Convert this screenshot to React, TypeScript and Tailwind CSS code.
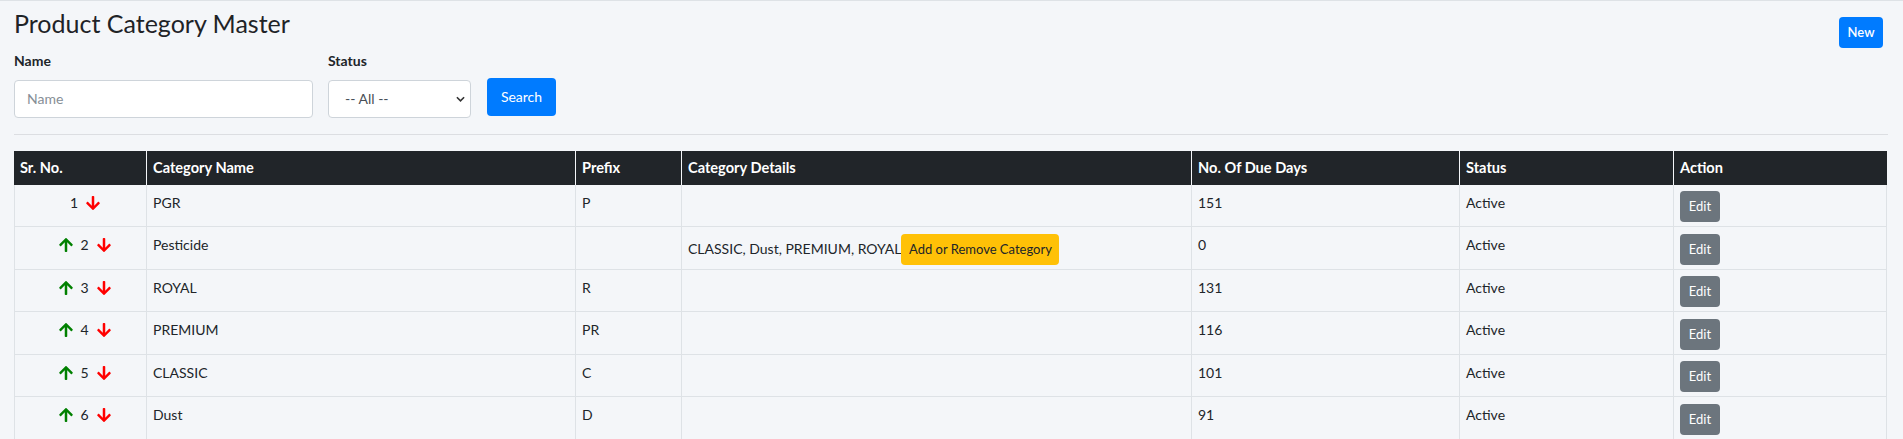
import React from 'react';

const UP_PATH =
  'M34.9 289.5l-22.2-22.2c-9.4-9.4-9.4-24.6 0-33.9L207 39c9.4-9.4 24.6-9.4 33.9 0l194.3 194.3c9.4 9.4 9.4 24.6 0 33.9L413 289.4c-9.5 9.5-25 9.3-34.3-.4L264 168.6V456c0 13.3-10.7 24-24 24h-32c-13.3 0-24-10.7-24-24V168.6L69.2 289.1c-9.3 9.8-24.8 10-34.3.4z';
const DOWN_PATH =
  'M413.1 222.5l22.2 22.2c9.4 9.4 9.4 24.6 0 33.9L241 473c-9.4 9.4-24.6 9.4-33.9 0L12.7 278.6c-9.4-9.4-9.4-24.6 0-33.9l22.2-22.2c9.5-9.5 25-9.3 34.3.4L184 343.4V56c0-13.3 10.7-24 24-24h32c13.3 0 24 10.7 24 24v287.4l114.8-120.5c9.3-9.8 24.8-10 34.3-.4z';

function ArrowUp() {
  return (
    <svg viewBox="0 0 448 512" className="inline-block w-[14px] h-[16px] align-[-3px] fill-[#008000] mr-[7px]">
      <path d={UP_PATH} />
    </svg>
  );
}

function ArrowDown() {
  return (
    <svg viewBox="0 0 448 512" className="inline-block w-[14px] h-[16px] align-[-3px] fill-[#ff0000] ml-[8px]">
      <path d={DOWN_PATH} />
    </svg>
  );
}

type Row = {
  n: number;
  name: string;
  prefix: string;
  details: string;
  days: string;
  up: boolean;
  btn?: boolean;
};

const rows: Row[] = [
  { n: 1, name: 'PGR', prefix: 'P', details: '', days: '151', up: false },
  { n: 2, name: 'Pesticide', prefix: '', details: 'CLASSIC, Dust, PREMIUM, ROYAL', days: '0', up: true, btn: true },
  { n: 3, name: 'ROYAL', prefix: 'R', details: '', days: '131', up: true },
  { n: 4, name: 'PREMIUM', prefix: 'PR', details: '', days: '116', up: true },
  { n: 5, name: 'CLASSIC', prefix: 'C', details: '', days: '101', up: true },
  { n: 6, name: 'Dust', prefix: 'D', details: '', days: '91', up: true },
];

const td = 'align-top pt-[7px] px-[6px] border-r border-b border-[#dee2e6] leading-[21px]';
const th = 'h-[34px] align-middle text-left px-[6px] font-bold text-[14.6px] text-white bg-[#212529] border-r border-[#f4f6f9] leading-[21px]';

export default function App() {
  return (
    <div className="min-h-screen w-full bg-[#f4f6f9] border-t border-[#dee2e6] text-[#212529] font-['Lato',sans-serif] text-[14px]">
      <div className="pl-[14px] pr-[15px]">
        <div className="flex justify-between items-start">
          <div>
            <h1 className="text-[25px] leading-[30px] mt-[6.5px] font-normal text-[#1f2327]">Product Category Master</h1>
            <div className="flex items-start mt-[12px]">
              <div className="w-[299px] flex flex-col">
                <label className="font-bold leading-[21px]">Name</label>
                <input
                  placeholder="Name"
                  className="mt-[9px] h-[38px] w-full bg-white border border-[#ced4da] rounded-[4px] pl-[12px] text-[14px] text-[#495057] placeholder:text-[#868e96] outline-none"
                />
              </div>
              <div className="w-[143px] ml-[15px] flex flex-col">
                <label className="font-bold leading-[21px]">Status</label>
                <div className="relative mt-[9px]">
                  <select className="appearance-none h-[38px] w-full bg-white border border-[#ced4da] rounded-[4px] pl-[16px] text-[14px] text-[#495057] outline-none">
                    <option>-- All --</option>
                    <option>Active</option>
                    <option>Inactive</option>
                  </select>
                  <svg viewBox="0 0 10 6" className="absolute right-[6px] top-[16px] w-[9px] h-[6px] pointer-events-none">
                    <polyline points="1,1 5,5 9,1" fill="none" stroke="#333" strokeWidth="1.8" />
                  </svg>
                </div>
              </div>
              <button className="ml-[16px] mt-[28px] w-[69px] h-[38px] bg-[#007bff] text-white rounded-[4px] text-[14px] flex items-center justify-center">
                Search
              </button>
            </div>
          </div>
          <button className="mt-[16px] mr-[5px] w-[44px] h-[31px] bg-[#007bff] text-white rounded-[4px] text-[13px] font-semibold flex items-center justify-center">
            New
          </button>
        </div>
        <hr className="mt-[16px] border-0 border-t border-[#dcdee2]" />
        <table className="mt-[16px] table-fixed border-separate border-spacing-0 w-[1873px]">
          <thead>
            <tr>
              <th className={`${th} w-[133px]`}>Sr. No.</th>
              <th className={`${th} w-[429px]`}>Category Name</th>
              <th className={`${th} w-[106px]`}>Prefix</th>
              <th className={`${th} w-[510px]`}>Category Details</th>
              <th className={`${th} w-[268px]`}>No. Of Due Days</th>
              <th className={`${th} w-[214px]`}>Status</th>
              <th className={`${th} w-[213px] border-r-0`}>Action</th>
            </tr>
          </thead>
          <tbody>
            {rows.map((r) => (
              <tr key={r.n} className="h-[42.5px]">
                <td className={`${td} border-l text-center pl-[12px] pr-[3px]`}>
                  {r.up && <ArrowUp />}
                  {r.n}
                  <ArrowDown />
                </td>
                <td className={td}>{r.name}</td>
                <td className={td}>{r.prefix}</td>
                <td className={td}>
                  {r.btn ? (
                    <div className="flex items-baseline">
                      <span>{r.details}</span>
                      <span className="inline-flex items-center justify-center w-[158px] h-[31px] bg-[#ffc107] rounded-[4px] text-[13px] text-[#212529]">
                        Add or Remove Category
                      </span>
                    </div>
                  ) : (
                    r.details
                  )}
                </td>
                <td className={td}>{r.days}</td>
                <td className={td}>Active</td>
                <td className={td}>
                  <button className="block w-[40px] h-[31px] bg-[#6c757d] text-white rounded-[4px] text-[13px] -mt-[0.5px]">
                    Edit
                  </button>
                </td>
              </tr>
            ))}
          </tbody>
        </table>
      </div>
    </div>
  );
}
